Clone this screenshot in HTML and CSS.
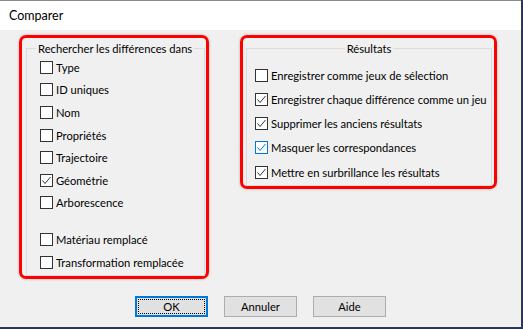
FILE: index.html
```html
<!DOCTYPE html>
<html lang="fr">
<head>
<meta charset="utf-8">
<title>Comparer</title>
<link rel="stylesheet" href="styles.css">
</head>
<body>
<div class="window">
  <div class="titlebar">Comparer</div>
  <div class="content">
    <div class="panels">
      <div class="redbox left-box">
        <fieldset class="group group-left">
          <legend class="legend-left">Rechercher les différences dans</legend>
          <div class="rows rows-left">
            <div class="row"><span class="cb"></span><span class="lbl">Type</span></div>
            <div class="row"><span class="cb"></span><span class="lbl">ID uniques</span></div>
            <div class="row"><span class="cb"></span><span class="lbl">Nom</span></div>
            <div class="row"><span class="cb"></span><span class="lbl">Propriétés</span></div>
            <div class="row"><span class="cb"></span><span class="lbl">Trajectoire</span></div>
            <div class="row"><span class="cb checked"><svg viewBox="0 0 11 11" width="11" height="11"><polyline points="1.5,5.5 4,8.5 9.5,2" /></svg></span><span class="lbl">Géométrie</span></div>
            <div class="row"><span class="cb"></span><span class="lbl">Arborescence</span></div>
            <div class="row spaced"><span class="cb"></span><span class="lbl">Matériau remplacé</span></div>
            <div class="row"><span class="cb"></span><span class="lbl">Transformation remplacée</span></div>
          </div>
        </fieldset>
      </div>
      <div class="redbox right-box">
        <fieldset class="group group-right">
          <legend class="legend-right">Résultats</legend>
          <div class="rows rows-right">
            <div class="row"><span class="cb"></span><span class="lbl">Enregistrer comme jeux de sélection</span></div>
            <div class="row"><span class="cb checked"><svg viewBox="0 0 11 11" width="11" height="11"><polyline points="1.5,5.5 4,8.5 9.5,2" /></svg></span><span class="lbl">Enregistrer chaque différence comme un jeu</span></div>
            <div class="row"><span class="cb checked"><svg viewBox="0 0 11 11" width="11" height="11"><polyline points="1.5,5.5 4,8.5 9.5,2" /></svg></span><span class="lbl">Supprimer les anciens résultats</span></div>
            <div class="row"><span class="cb checked hover"><svg viewBox="0 0 11 11" width="11" height="11"><polyline points="1.5,5.5 4,8.5 9.5,2" /></svg></span><span class="lbl">Masquer les correspondances</span></div>
            <div class="row"><span class="cb checked"><svg viewBox="0 0 11 11" width="11" height="11"><polyline points="1.5,5.5 4,8.5 9.5,2" /></svg></span><span class="lbl">Mettre en surbrillance les résultats</span></div>
          </div>
        </fieldset>
      </div>
    </div>
    <div class="buttons">
      <div class="btn default"><span class="focus">OK</span></div>
      <div class="btn">Annuler</div>
      <div class="btn">Aide</div>
    </div>
  </div>
</div>
</body>
</html>
```
FILE: styles.css
```css
html, body {
  margin: 0;
  padding: 0;
  background: #22365f;
}
body {
  width: 523px;
  height: 329px;
  overflow: hidden;
  font-family: Lato, "Noto Sans", sans-serif;
  font-size: 11.2px;
  color: #000;
}
.window {
  width: 521px;
  height: 327px;
  border-right: 1px solid #3a3a3a;
  border-bottom: 1px solid #3a3a3a;
  background: #f0f0f0;
  overflow: hidden;
}
.titlebar {
  height: 30px;
  box-sizing: border-box;
  border-top: 1px solid #8a8a8a;
  background: #fff;
  padding-left: 9px;
  line-height: 30px;
  font-size: 12.5px;
}
.content {
  padding: 5px 0 0 19px;
}
.panels {
  display: flex;
  align-items: flex-start;
  gap: 31px;
}
.redbox {
  box-sizing: border-box;
  border: 3px solid #ff0000;
  border-radius: 7px;
  box-shadow: 0 0 3px rgba(0, 0, 0, 0.25);
  padding: 3px 1px 2px 4px;
}
.left-box {
  width: 190px;
  height: 244px;
}
.right-box {
  width: 257px;
  height: 154px;
  padding-left: 3px;
  padding-right: 2px;
}
.group {
  margin: 0;
  padding: 0;
  border: 1px solid #dcdcdc;
  min-width: 0;
  box-sizing: border-box;
}
.group-left {
  height: 235px;
}
.group-right {
  height: 145px;
}
legend {
  padding: 0 2px;
  line-height: 15px;
  white-space: nowrap;
}
.legend-left {
  margin-left: 9px;
}
.legend-right {
  margin: 0 auto;
}
.rows {
  display: flex;
  flex-direction: column;
}
.rows-left {
  padding: 0 0 0 13px;
}
.rows-right {
  padding: 7px 0 0 8px;
}
.row {
  display: flex;
  align-items: center;
  white-space: nowrap;
}
.rows-left .row {
  height: 22.6px;
}
.rows-left .row.spaced {
  margin-top: 14px;
}
.rows-right .row {
  height: 24.25px;
}
.cb {
  width: 13px;
  height: 13px;
  box-sizing: border-box;
  border: 1px solid #333;
  background: #fff;
  flex: none;
  display: flex;
  align-items: center;
  justify-content: center;
}
.cb svg polyline {
  fill: none;
  stroke: #333;
  stroke-width: 1;
}
.cb.hover {
  border-color: #0078d7;
}
.cb.hover svg polyline {
  stroke: #0078d7;
}
.lbl {
  margin-left: 3px;
  line-height: 15px;
}
.buttons {
  display: flex;
  justify-content: center;
  gap: 16px;
  margin: 17px 0 0 -19px;
}
.btn {
  width: 73px;
  height: 21px;
  box-sizing: border-box;
  border: 1px solid #adadad;
  background: #e1e1e1;
  display: flex;
  align-items: center;
  justify-content: center;
  line-height: 15px;
}
.btn.default {
  border: 2px solid #0078d7;
  padding: 1px;
}
.focus {
  flex: 1;
  align-self: stretch;
  border: 1px dotted #000;
  display: flex;
  align-items: center;
  justify-content: center;
}
```
